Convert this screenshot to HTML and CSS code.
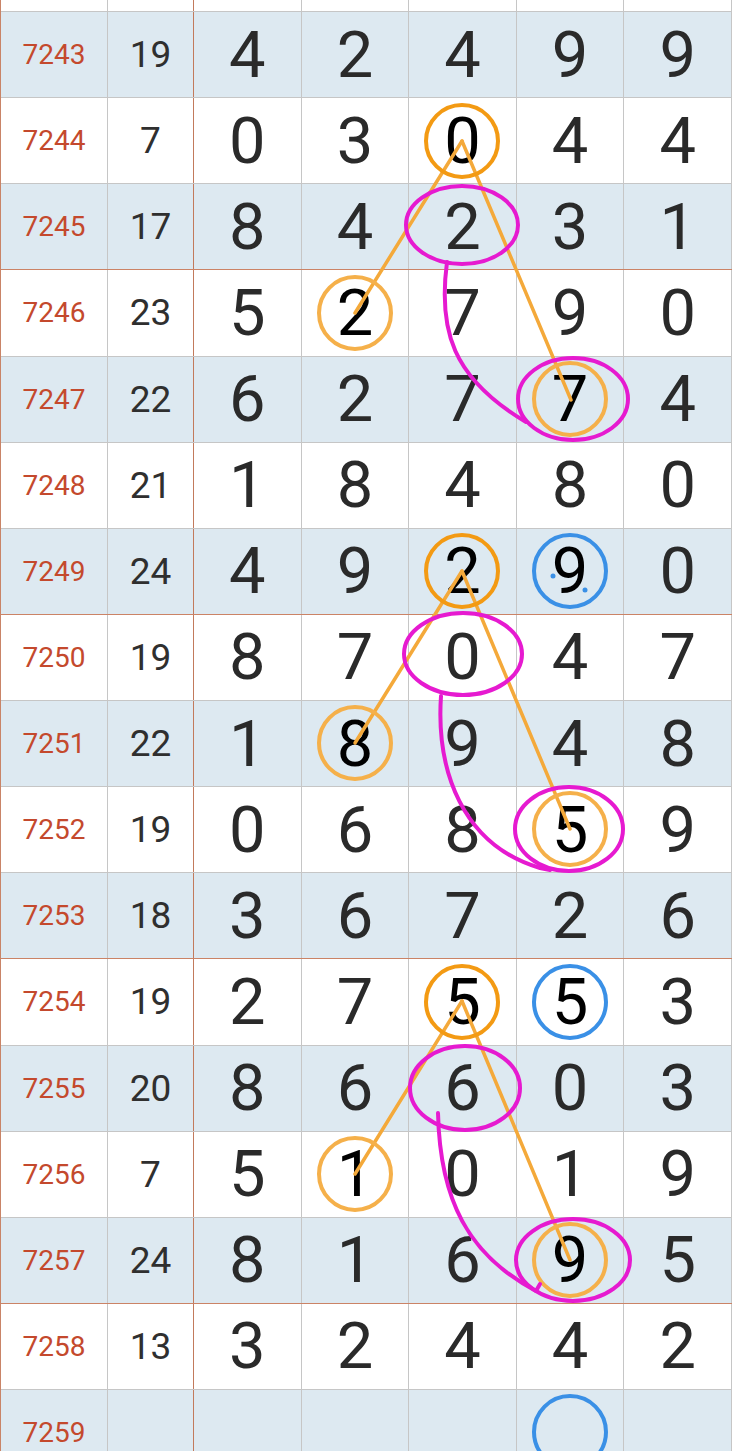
FILE: index.html
```html
<!DOCTYPE html>
<html lang="zh">
<head>
    <meta charset="UTF-8">
    <meta name="viewport" content="width=device-width, initial-scale=1.0">
    <title>走势图</title>
    <link rel="stylesheet" href="styles.css">
</head>
<body>
<div class="page">
    <div class="chart">
        <div class="row top"><div class="c no"></div><div class="c sum"></div><div class="c d"></div><div class="c d"></div><div class="c d"></div><div class="c d"></div><div class="c d"></div></div>

        <div class="row odd"><div class="c no">7243</div><div class="c sum">19</div><div class="c d">4</div><div class="c d">2</div><div class="c d">4</div><div class="c d">9</div><div class="c d">9</div></div>
        <div class="row"><div class="c no">7244</div><div class="c sum">7</div><div class="c d">0</div><div class="c d">3</div><div class="c d hit">0</div><div class="c d">4</div><div class="c d">4</div></div>
        <div class="row odd sep"><div class="c no">7245</div><div class="c sum">17</div><div class="c d">8</div><div class="c d">4</div><div class="c d">2</div><div class="c d">3</div><div class="c d">1</div></div>
        <div class="row"><div class="c no">7246</div><div class="c sum">23</div><div class="c d">5</div><div class="c d hit">2</div><div class="c d">7</div><div class="c d">9</div><div class="c d">0</div></div>
        <div class="row odd"><div class="c no">7247</div><div class="c sum">22</div><div class="c d">6</div><div class="c d">2</div><div class="c d">7</div><div class="c d hit">7</div><div class="c d">4</div></div>
        <div class="row"><div class="c no">7248</div><div class="c sum">21</div><div class="c d">1</div><div class="c d">8</div><div class="c d">4</div><div class="c d">8</div><div class="c d">0</div></div>
        <div class="row odd sep"><div class="c no">7249</div><div class="c sum">24</div><div class="c d">4</div><div class="c d">9</div><div class="c d hit">2</div><div class="c d hit">9</div><div class="c d">0</div></div>
        <div class="row"><div class="c no">7250</div><div class="c sum">19</div><div class="c d">8</div><div class="c d">7</div><div class="c d">0</div><div class="c d">4</div><div class="c d">7</div></div>
        <div class="row odd"><div class="c no">7251</div><div class="c sum">22</div><div class="c d">1</div><div class="c d hit">8</div><div class="c d">9</div><div class="c d">4</div><div class="c d">8</div></div>
        <div class="row"><div class="c no">7252</div><div class="c sum">19</div><div class="c d">0</div><div class="c d">6</div><div class="c d">8</div><div class="c d hit">5</div><div class="c d">9</div></div>
        <div class="row odd sep"><div class="c no">7253</div><div class="c sum">18</div><div class="c d">3</div><div class="c d">6</div><div class="c d">7</div><div class="c d">2</div><div class="c d">6</div></div>
        <div class="row"><div class="c no">7254</div><div class="c sum">19</div><div class="c d">2</div><div class="c d">7</div><div class="c d hit">5</div><div class="c d hit">5</div><div class="c d">3</div></div>
        <div class="row odd"><div class="c no">7255</div><div class="c sum">20</div><div class="c d">8</div><div class="c d">6</div><div class="c d">6</div><div class="c d">0</div><div class="c d">3</div></div>
        <div class="row"><div class="c no">7256</div><div class="c sum">7</div><div class="c d">5</div><div class="c d hit">1</div><div class="c d">0</div><div class="c d">1</div><div class="c d">9</div></div>
        <div class="row odd sep"><div class="c no">7257</div><div class="c sum">24</div><div class="c d">8</div><div class="c d">1</div><div class="c d">6</div><div class="c d hit">9</div><div class="c d">5</div></div>
        <div class="row"><div class="c no">7258</div><div class="c sum">13</div><div class="c d">3</div><div class="c d">2</div><div class="c d">4</div><div class="c d">4</div><div class="c d">2</div></div>
        <div class="row odd"><div class="c no">7259</div><div class="c sum"></div><div class="c d"></div><div class="c d"></div><div class="c d"></div><div class="c d"></div><div class="c d"></div></div>
    </div>

    <!-- 手画的标记 -->
    <svg class="marks" width="732" height="1451" viewBox="0 0 732 1451">
        <g class="tri">
            <line x1="462" y1="141" x2="355" y2="313"/>
            <line x1="462" y1="141" x2="571" y2="400"/>
            <line x1="462" y1="571" x2="355" y2="743"/>
            <line x1="462" y1="571" x2="570" y2="829"/>
            <line x1="462" y1="1001" x2="355" y2="1174"/>
            <line x1="462" y1="1001" x2="570" y2="1260"/>
        </g>
        <g class="ring">
            <circle cx="462" cy="141" r="36"/>
            <circle cx="462" cy="571" r="36"/>
            <circle cx="462" cy="1002" r="36"/>
        </g>
        <g class="ring light">
            <circle cx="355" cy="313" r="36"/>
            <circle cx="570" cy="399" r="36"/>
            <circle cx="355" cy="743" r="36"/>
            <circle cx="570" cy="829" r="36"/>
            <circle cx="355" cy="1174" r="36"/>
            <circle cx="570" cy="1260" r="36"/>
        </g>
        <g class="blue">
            <circle cx="570" cy="571" r="36"/>
            <circle cx="570" cy="1002" r="36"/>
            <circle cx="570" cy="1432" r="36"/>
        </g>
        <circle class="dot" cx="553" cy="576" r="2.5"/>
        <circle class="dot" cx="585" cy="590" r="2.5"/>
        <g class="pink">
            <ellipse cx="462" cy="225" rx="56" ry="39"/>
            <ellipse cx="573" cy="399" rx="55" ry="41"/>
            <path d="M447 262 C438 330 452 378 526 422"/>
            <ellipse cx="463" cy="654" rx="59" ry="41"/>
            <ellipse cx="569" cy="829" rx="54" ry="42"/>
            <path d="M441 696 C436 770 462 845 540 868 L550 870"/>
            <ellipse cx="465" cy="1088" rx="55" ry="42"/>
            <ellipse cx="573" cy="1260" rx="57" ry="41"/>
            <path d="M438 1113 C440 1200 468 1255 536 1291 L540 1284"/>
        </g>
    </svg>
</div>
</body>
</html>
```

FILE: styles.css
```css
body {
    margin: 0;
    background: #fff;
    font-family: Roboto, "Noto Sans", Arial, sans-serif;
}

.page {
    position: relative;
    width: 732px;
    height: 1451px;
    overflow: hidden;
}

.chart {
    border-left: 1px solid #c98467;
}

.row {
    display: grid;
    grid-template-columns: 107px 86px repeat(5, 1fr);
    height: 86.125px;
    box-sizing: border-box;
    border-bottom: 1px solid #c6c6c6;
}

.row.top {
    height: 12px;
}

.row.odd {
    background: #dde9f1;
}

.row.sep {
    border-bottom-color: #cb8366;
}

.c {
    display: flex;
    align-items: center;
    justify-content: center;
    border-right: 1px solid #c6c6c6;
}

.c.sum {
    border-right-color: #c27a5c;
}

.no {
    color: #c4492d;
    font-size: 28px;
}

.sum {
    color: #2f2f2f;
    font-size: 37px;
}

.d {
    color: #2a2a2a;
    font-size: 65px;
}

.d.hit {
    color: #000;
}

/* 标记层 */
.marks {
    position: absolute;
    top: 0;
    left: 0;
    pointer-events: none;
}

.marks line {
    stroke: #f4a93a;
    stroke-width: 3.5;
    stroke-linecap: round;
}

.marks circle,
.marks ellipse,
.marks path {
    fill: none;
}

.ring circle {
    stroke: #f39a13;
    stroke-width: 4;
}

.ring.light circle {
    stroke: #f5b04a;
}

.blue circle {
    stroke: #3a90e6;
    stroke-width: 4;
}

.marks .dot {
    fill: #3a90e6;
}

.pink ellipse,
.pink path {
    stroke: #e61ad0;
    stroke-width: 4;
    stroke-linecap: round;
    stroke-linejoin: round;
}
```
